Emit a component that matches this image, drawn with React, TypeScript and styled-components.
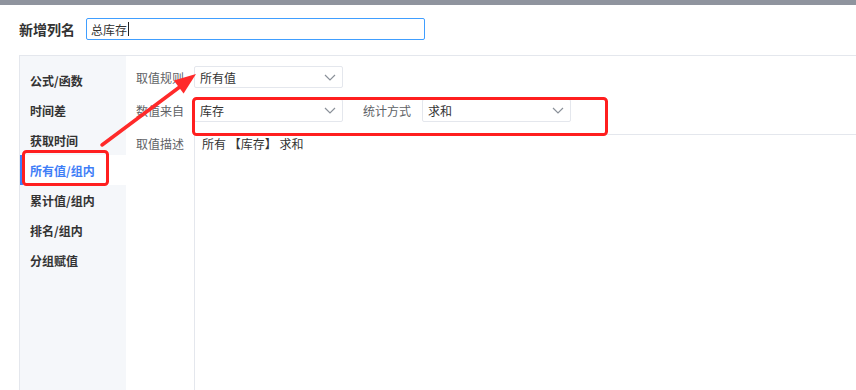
import React from "react";
import styled, { createGlobalStyle } from "styled-components";

const Global = createGlobalStyle`
  html, body { margin: 0; padding: 0; background: #fff; }
  body { font-family: "Noto Sans CJK SC", "Noto Sans", sans-serif; font-size: 12px; color: #333; }
  * { box-sizing: border-box; }
`;

const Page = styled.div`
  position: relative;
  width: 856px;
  height: 390px;
  overflow: hidden;
  display: flex;
  flex-direction: column;
`;

const TopBar = styled.div`
  height: 5px;
  background: #8f949e;
  flex: none;
`;

const TitleRow = styled.div`
  display: flex;
  align-items: center;
  height: 50px;
  padding: 0 0 2px 19px;
  gap: 10px;
  flex: none;
`;

const Title = styled.div`
  font-size: 14px;
  font-weight: 700;
  color: #333;
  width: 57px;
  white-space: nowrap;
`;

const NameInput = styled.div`
  width: 339px;
  height: 22px;
  border: 1px solid #409eff;
  border-radius: 2px;
  padding: 0 4px;
  display: flex;
  align-items: center;
  font-size: 12px;
  color: #333;
`;

const Caret = styled.span`
  display: inline-block;
  width: 1px;
  height: 14px;
  background: #222;
  margin-left: 1px;
`;

const Panel = styled.div`
  flex: 1;
  margin-left: 19px;
  border-top: 1px solid #e4e7ed;
  border-left: 1px solid #e4e7ed;
  display: flex;
`;

const Sidebar = styled.div`
  width: 106px;
  background: #f5f7fa;
  padding-top: 9px;
  display: flex;
  flex-direction: column;
  flex: none;
`;

const NavItem = styled.div<{ $active?: boolean }>`
  height: 30px;
  display: flex;
  align-items: center;
  padding-left: ${(p) => (p.$active ? "7px" : "10px")};
  font-size: 12px;
  font-weight: 700;
  color: ${(p) => (p.$active ? "#3f7ef7" : "#333")};
  background: ${(p) => (p.$active ? "#fff" : "transparent")};
  border-left: ${(p) => (p.$active ? "3px solid #3f7ef7" : "none")};
`;

const Content = styled.div`
  flex: 1;
  display: flex;
  flex-direction: column;
  padding-top: 10px;
`;

const FormRow = styled.div<{ $mb?: number }>`
  display: flex;
  align-items: center;
  padding-left: 10px;
  margin-bottom: ${(p) => p.$mb ?? 0}px;
`;

const Label = styled.div<{ $ml?: number; $w?: number }>`
  font-size: 12px;
  color: #606266;
  width: ${(p) => p.$w ?? 58}px;
  margin-left: ${(p) => p.$ml ?? 0}px;
  white-space: nowrap;
`;

const Select = styled.div<{ $h?: number }>`
  width: 149px;
  height: ${(p) => p.$h ?? 22}px;
  border: 1px solid #e4e7ed;
  border-radius: 2px;
  padding: 0 6px 0 5px;
  display: flex;
  align-items: center;
  justify-content: space-between;
  font-size: 12px;
  color: #333;
  background: #fff;
`;

const DescRow = styled.div`
  flex: 1;
  display: flex;
  padding-left: 10px;
`;

const DescLabel = styled.div`
  width: 58px;
  font-size: 12px;
  color: #606266;
  padding-top: 1px;
`;

const DescBox = styled.div`
  flex: 1;
  border-top: 1px solid #e4e7ed;
  border-left: 1px solid #e4e7ed;
  padding: 0 7px;
  font-size: 12px;
  color: #333;
`;

const Overlay = styled.svg`
  position: absolute;
  left: 0;
  top: 0;
  width: 856px;
  height: 390px;
  pointer-events: none;
`;

const Chevron = () => (
  <svg width="12" height="7" viewBox="0 0 12 7">
    <path d="M1 1 L6 6 L11 1" fill="none" stroke="#8a9099" strokeWidth="1.2" />
  </svg>
);

const navItems = ["公式/函数", "时间差", "获取时间", "所有值/组内", "累计值/组内", "排名/组内", "分组赋值"];

export default function App() {
  return (
    <>
      <Global />
      <Page>
        <TopBar />
        <TitleRow>
          <Title>新增列名</Title>
          <NameInput>
            总库存
            <Caret />
          </NameInput>
        </TitleRow>
        <Panel>
          <Sidebar>
            {navItems.map((n) => (
              <NavItem key={n} $active={n === "所有值/组内"}>
                {n}
              </NavItem>
            ))}
          </Sidebar>
          <Content>
            <FormRow $mb={11}>
              <Label>取值规则</Label>
              <Select>
                所有值
                <Chevron />
              </Select>
            </FormRow>
            <FormRow $mb={12}>
              <Label>数值来自</Label>
              <Select $h={23}>
                库存
                <Chevron />
              </Select>
              <Label $ml={20} $w={59}>统计方式</Label>
              <Select $h={23}>
                求和
                <Chevron />
              </Select>
            </FormRow>
            <DescRow>
              <DescLabel>取值描述</DescLabel>
              <DescBox>所有 【库存】 求和</DescBox>
            </DescRow>
          </Content>
        </Panel>
        <Overlay viewBox="0 0 856 390">
          <rect x="23.5" y="151.5" width="84" height="33" rx="3" fill="none" stroke="#ff1f1f" strokeWidth="3" />
          <rect x="193.5" y="98.5" width="413" height="36" rx="3" fill="none" stroke="#ff1f1f" strokeWidth="3" />
          <line x1="102" y1="145" x2="181" y2="86" stroke="#ff2a2a" strokeWidth="3.5" strokeLinecap="round" />
          <polygon points="196,74 183.6,93.4 173.8,80.4" fill="#ff2a2a" />
        </Overlay>
      </Page>
    </>
  );
}
